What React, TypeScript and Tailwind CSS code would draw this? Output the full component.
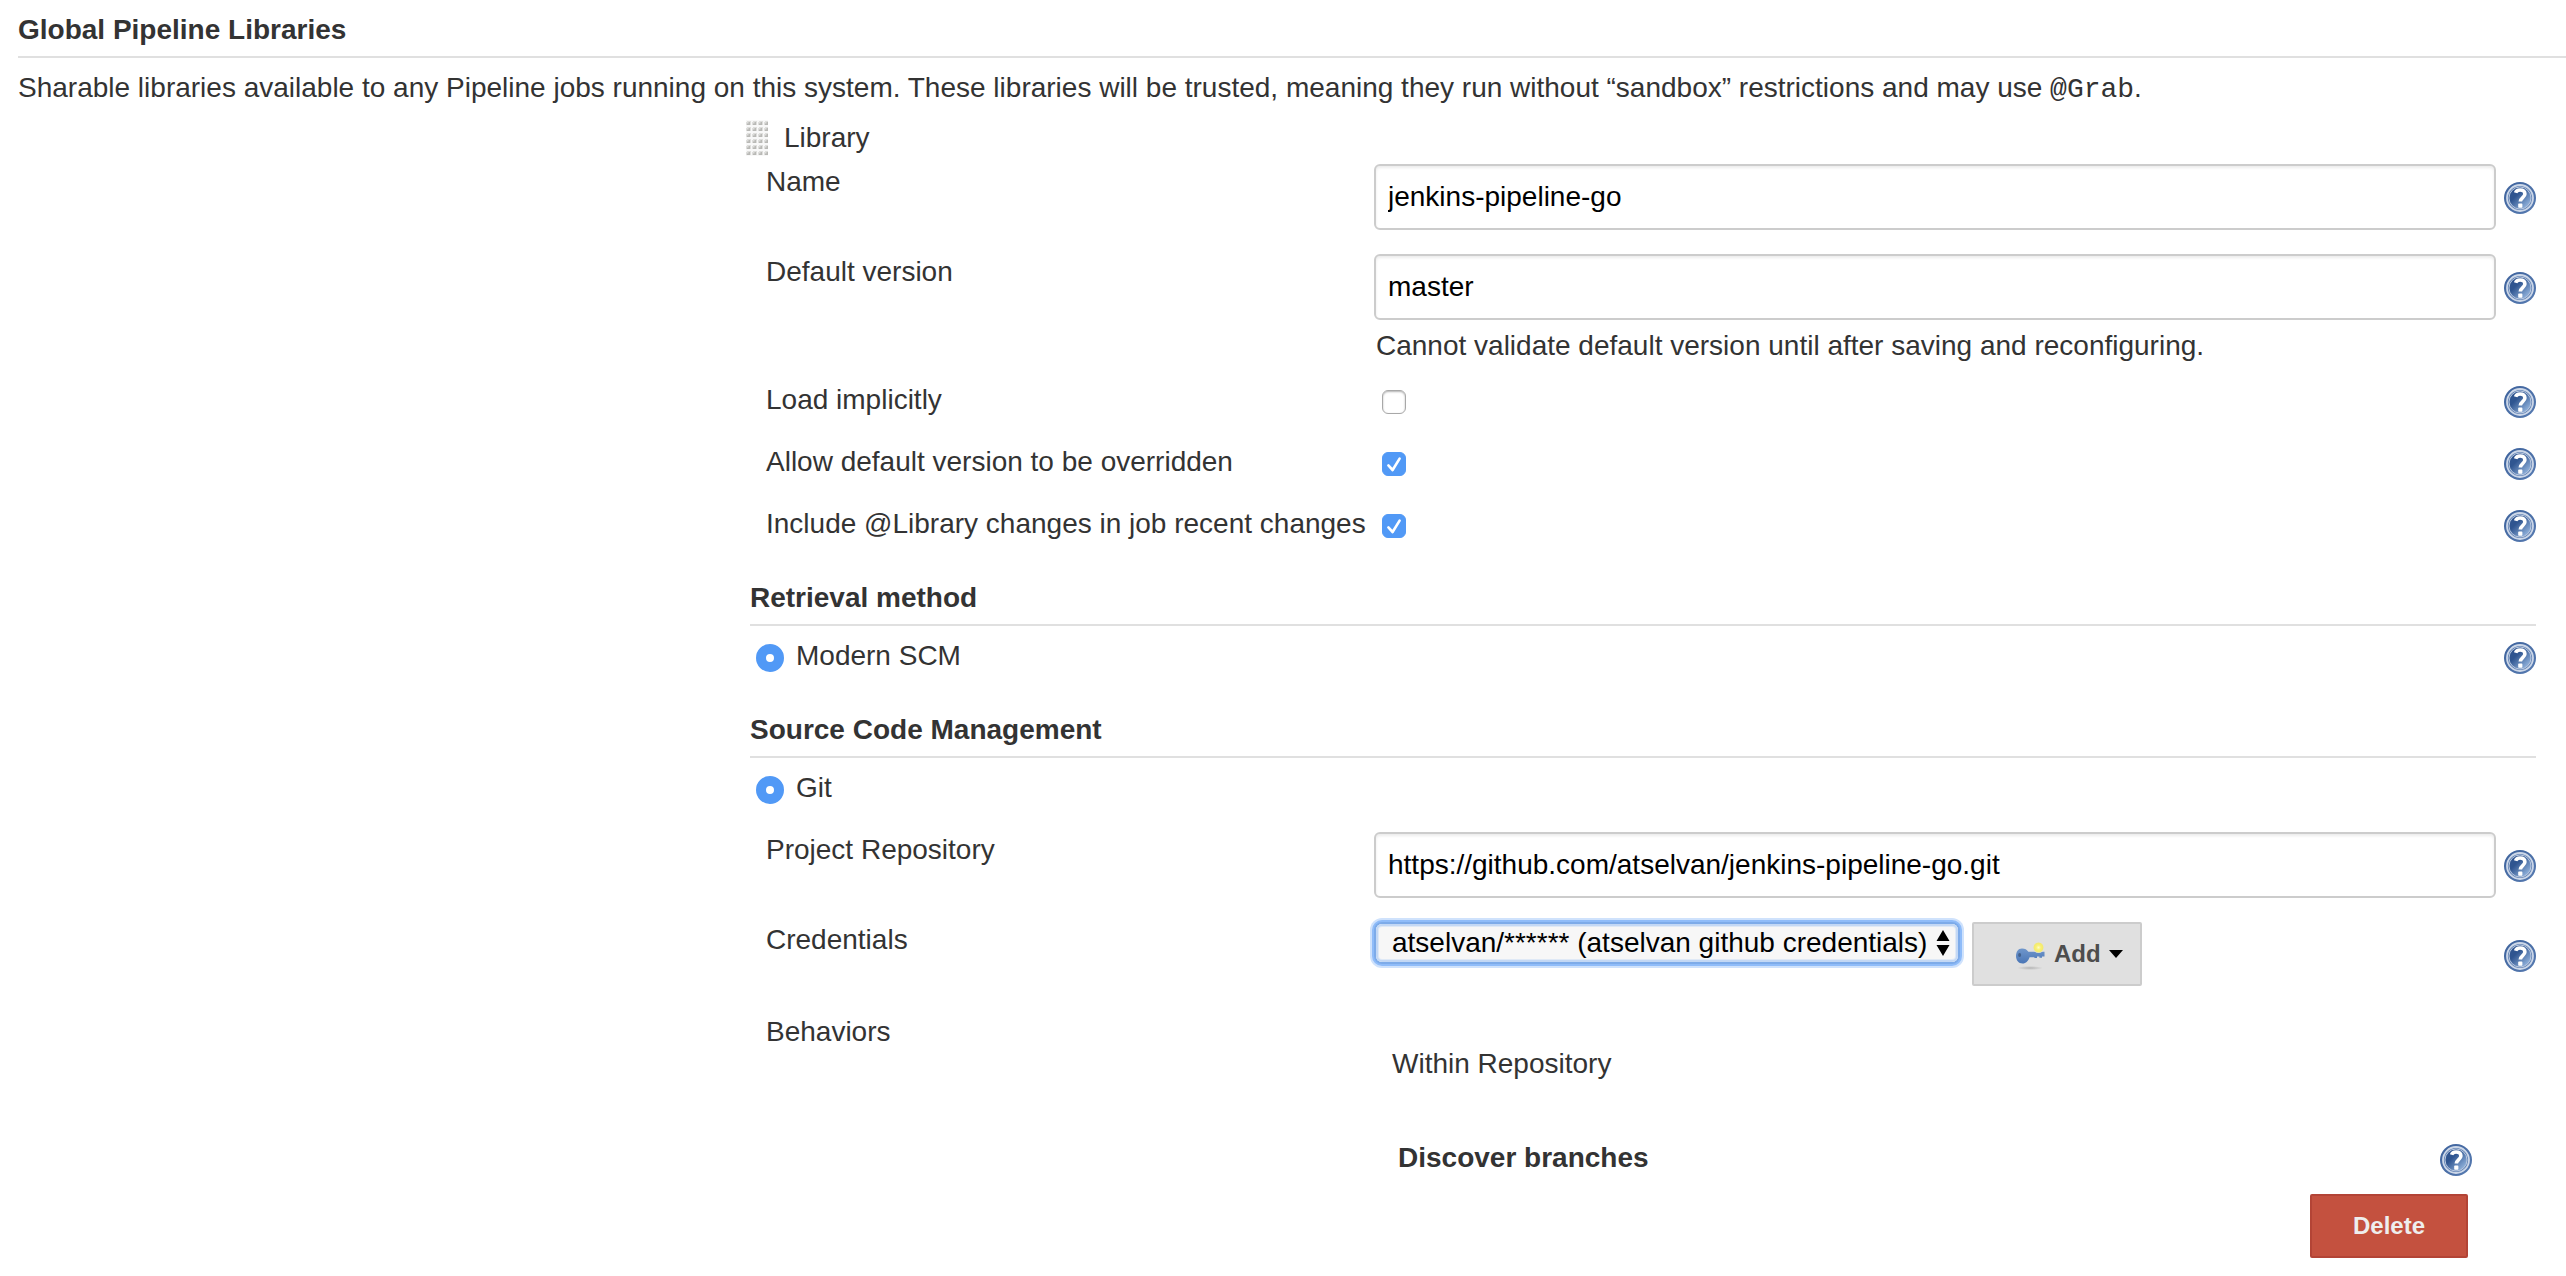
import { useId, type ReactNode } from "react";

function HelpIcon() {
  return (
    <svg viewBox="0 0 32 32" className="size-8" aria-hidden="true">
      <defs>
        <linearGradient id="help-fill" x1="0.15" y1="0.15" x2="0.85" y2="0.85">
          <stop offset="0.3" stopColor="#2f5590" />
          <stop offset="1" stopColor="#8fb0da" />
        </linearGradient>
        <linearGradient id="help-rim" x1="0" y1="0" x2="1" y2="1">
          <stop offset="0" stopColor="#3c619b" />
          <stop offset="1" stopColor="#587cb2" />
        </linearGradient>
      </defs>
      <circle cx="16" cy="16" r="16" fill="url(#help-rim)" />
      <circle cx="16" cy="16" r="13" fill="#5f80b3" stroke="#ccd7e8" strokeWidth="1.8" />
      <circle cx="16" cy="16" r="11" fill="url(#help-fill)" stroke="#b9c8df" strokeWidth="1" />
      <path
        d="M11.6 10.8C12.2 8.9 13.6 8 16 8c3 0 4.9 1.5 4.9 4 0 3.5-4.6 3.6-4.6 7.6"
        fill="none"
        stroke="#fff"
        strokeWidth="3.6"
      />
      <rect x="14.2" y="21.6" width="4.2" height="4.2" rx="0.8" fill="#fff" />
    </svg>
  );
}

function HelpButton({ topic, className }: { topic: string; className: string }) {
  return (
    <button type="button" aria-label={`Help for ${topic}`} className={`size-8 shrink-0 ${className}`}>
      <HelpIcon />
    </button>
  );
}

function KeyIcon() {
  return (
    <svg viewBox="0 0 32 32" className="size-8" aria-hidden="true">
      <defs>
        <radialGradient id="key-shadow">
          <stop offset="0" stopColor="#b4b4b4" />
          <stop offset="1" stopColor="#e0e0e0" />
        </radialGradient>
        <radialGradient id="key-glow">
          <stop offset="0" stopColor="#fffcc4" />
          <stop offset="0.45" stopColor="#f8f073" />
          <stop offset="0.8" stopColor="#f3ea70" />
          <stop offset="1" stopColor="#e0e0e0" />
        </radialGradient>
        <linearGradient id="key-body" x1="0" y1="0" x2="0" y2="1">
          <stop offset="0" stopColor="#6f96cb" />
          <stop offset="1" stopColor="#4a76b6" />
        </linearGradient>
      </defs>
      <ellipse cx="16" cy="30" rx="13" ry="2" fill="url(#key-shadow)" />
      <path
        d="M8 10.5c3 0 5 1.2 6.4 3.3H30.5v4.6H28v1.4h-2.6v-1.2H23v1.4h-2.6v-.8h-4.8C14.4 22.6 12 25.5 8.6 25.5 4.4 25.5 2 22 2 18s2-7.5 6-7.5z"
        fill="url(#key-body)"
      />
      <ellipse cx="5.6" cy="17" rx="1.5" ry="2" fill="#42608c" />
      <circle cx="24.5" cy="9.5" r="5.5" fill="url(#key-glow)" />
    </svg>
  );
}

function Grip() {
  return (
    <svg viewBox="0 0 22 36" className="h-9 w-[22px]" aria-hidden="true">
      <defs>
        <pattern id="grip-dots" width="6" height="6" patternUnits="userSpaceOnUse">
          <rect width="6" height="6" fill="#f8f8f8" />
          <path d="M0 2h1V1h4v4H0z" fill="#dededc" />
          <path d="M1 5V3.5h1.5V2H4v3z" fill="#b9b9b6" />
        </pattern>
      </defs>
      <rect width="22" height="36" fill="url(#grip-dots)" />
    </svg>
  );
}

function SectionTitle({ children }: { children: ReactNode }) {
  return <h2 className="border-b-2 border-[#e0e0e0] pb-2 font-bold">{children}</h2>;
}

function TextRow({ label, value, note }: { label: string; value: string; note?: string }) {
  const id = useId();
  return (
    <div className="ml-4 flex">
      <label htmlFor={id} className="w-[608px] shrink-0">
        {label}
      </label>
      <div className="min-w-0 grow">
        <input
          id={id}
          type="text"
          defaultValue={value}
          className="block h-[66px] w-full rounded-md border-2 border-[#ccc] bg-white px-3 text-black shadow-[inset_0_2px_3px_rgba(0,0,0,0.08)] outline-none"
        />
        {note && <p className="mt-2 pl-0.5">{note}</p>}
      </div>
      <HelpButton topic={label} className="mt-[18px] ml-2" />
    </div>
  );
}

function CheckRow({ label, checked = false }: { label: string; checked?: boolean }) {
  const id = useId();
  return (
    <div className="ml-4 flex h-9">
      <label htmlFor={id} className="w-[608px] shrink-0">
        {label}
      </label>
      <span className="mt-2 ml-2 grid size-6">
        <input
          id={id}
          type="checkbox"
          defaultChecked={checked}
          className="peer col-start-1 row-start-1 size-6 appearance-none rounded-md border border-[#a8a8a8] bg-white shadow-[inset_0_1px_2px_rgba(0,0,0,0.3)] checked:border-[#5199f6] checked:bg-[#5199f6] checked:shadow-none"
        />
        <svg
          viewBox="0 0 24 24"
          className="pointer-events-none invisible col-start-1 row-start-1 size-6 peer-checked:visible"
          aria-hidden="true"
        >
          <path d="M6.4 13.4l4.2 4.6L17.6 6.6" fill="none" stroke="#fff" strokeWidth="2.6" strokeLinecap="round" strokeLinejoin="round" />
        </svg>
      </span>
      <HelpButton topic={label} className="mt-1 ml-auto" />
    </div>
  );
}

function RadioRow({ label, name, help = false }: { label: string; name: string; help?: boolean }) {
  return (
    <div className="flex h-9">
      <label className="flex">
        <input
          type="radio"
          name={name}
          defaultChecked
          className="mt-1.5 mr-3 ml-1.5 size-7 appearance-none rounded-full border-2 border-[#b4b4b4] bg-white checked:border-10 checked:border-[#5199f6]"
        />
        {label}
      </label>
      {help && <HelpButton topic={label} className="mt-1 ml-auto" />}
    </div>
  );
}

function CredentialsRow() {
  return (
    <div className="ml-4 flex">
      <label htmlFor="credentials" className="w-[608px] shrink-0">
        Credentials
      </label>
      <div className="mt-0.5 ml-0.5 grid h-[38px] w-[582px]">
        <select
          id="credentials"
          className="col-start-1 row-start-1 h-[38px] w-full appearance-none rounded-md bg-[#f7f7f7] pl-4 leading-8 text-black shadow-[inset_0_0_0_2px_#c3d8f5,inset_0_0_0_3px_#dfe9f6,0_0_0_2px_#7dabe9,0_0_0_4px_#8fbcf9,0_0_0_6px_#cfe2fc] outline-none"
        >
          <option>atselvan/****** (atselvan github credentials)</option>
        </select>
        <svg
          viewBox="0 0 14 26"
          className="pointer-events-none col-start-1 row-start-1 mt-1.5 mr-2 h-[26px] w-3.5 justify-self-end"
          aria-hidden="true"
        >
          <path d="M7 0l6.5 11H.5zM7 26L.5 15h13z" fill="#000" />
        </svg>
      </div>
      <button
        type="button"
        className="ml-3.5 flex h-16 w-[170px] items-center rounded-xs border-2 border-[#ccc] bg-[#e0e0e0] pl-10 text-2xl font-bold text-[#4d4d4d]"
      >
        <KeyIcon />
        <span className="ml-2">Add</span>
        <svg viewBox="0 0 14 8" className="ml-2 h-2 w-3.5" aria-hidden="true">
          <path d="M0 0h14L7 8z" fill="#000" />
        </svg>
      </button>
      <HelpButton topic="Credentials" className="mt-[18px] ml-auto" />
    </div>
  );
}

export default function App() {
  return (
    <main className="min-h-screen bg-white pt-3 pb-4 pl-[18px] font-['Liberation_Sans',Arial,sans-serif] text-[28px] leading-9 text-[#333]">
      <SectionTitle>Global Pipeline Libraries</SectionTitle>
      <p className="mt-3">
        Sharable libraries available to any Pipeline jobs running on this system. These libraries will be trusted, meaning
        they run without “sandbox” restrictions and may use{" "}
        <code className="font-['Liberation_Mono',monospace]">@Grab</code>.
      </p>

      <form className="mt-3 mr-[30px] ml-[732px]">
        <div className="-ml-1 flex gap-4">
          <Grip />
          <span>Library</span>
        </div>

        <div className="mt-2 flex flex-col gap-6">
          <TextRow label="Name" value="jenkins-pipeline-go" />
          <TextRow
            label="Default version"
            value="master"
            note="Cannot validate default version until after saving and reconfiguring."
          />
        </div>
        <div className="mt-[18px] flex flex-col gap-[26px]">
          <CheckRow label="Load implicitly" />
          <CheckRow label="Allow default version to be overridden" checked />
          <CheckRow label="Include @Library changes in job recent changes" checked />
        </div>

        <section className="mt-[38px] flex flex-col gap-3">
          <SectionTitle>Retrieval method</SectionTitle>
          <RadioRow label="Modern SCM" name="retrieval" help />
        </section>

        <section className="mt-[38px] flex flex-col gap-3">
          <SectionTitle>Source Code Management</SectionTitle>
          <RadioRow label="Git" name="scm" />
        </section>

        <div className="mt-[26px] flex flex-col gap-6">
          <TextRow label="Project Repository" value="https://github.com/atselvan/jenkins-pipeline-go.git" />
          <CredentialsRow />
        </div>

        <div className="mt-7 ml-4 flex">
          <span className="w-[608px] shrink-0">Behaviors</span>
          <div className="mt-8 grow pl-4">
            <p className="pl-0.5">Within Repository</p>
            <div className="mt-[58px] mr-16 flex justify-between pl-2">
              <h3 className="font-bold">Discover branches</h3>
              <HelpButton topic="Discover branches" className="mt-1" />
            </div>
            <div className="mt-[18px] mr-[68px] flex justify-end">
              <button
                type="button"
                className="h-16 w-[158px] rounded-xs border-2 border-[#b34436] bg-[#c4513f] text-2xl font-bold text-[#eee]"
              >
                Delete
              </button>
            </div>
          </div>
        </div>
      </form>
    </main>
  );
}
